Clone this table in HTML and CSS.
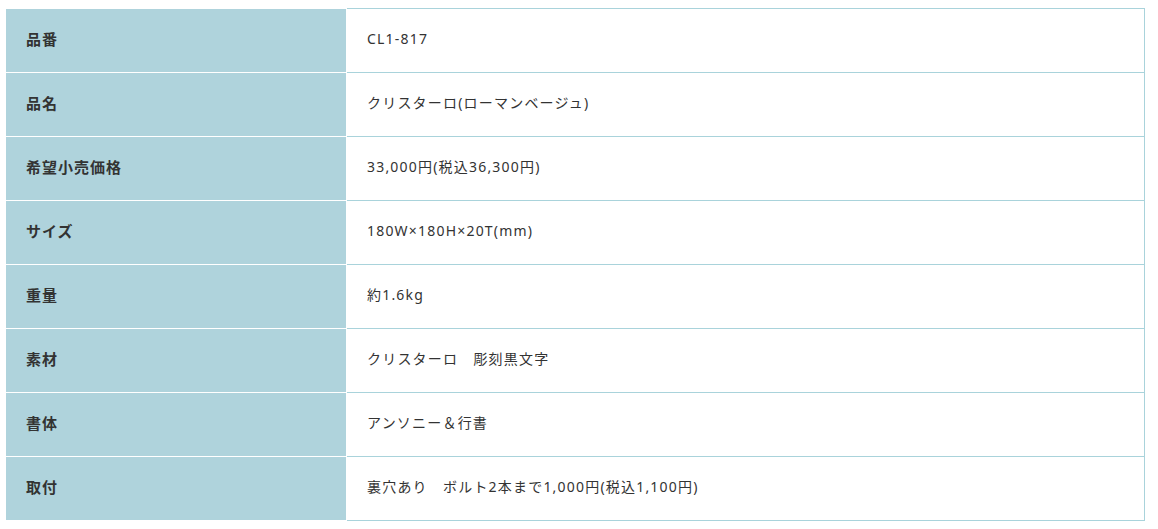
FILE: index.html
```html
<!DOCTYPE html>
<html lang="ja">
<head>
<meta charset="utf-8">
<link rel="stylesheet" href="styles.css">
</head>
<body>
<div class="wrap">
<table class="spec">
<tr><th>品番</th><td>CL1-817</td></tr>
<tr><th>品名</th><td>クリスターロ(ローマンベージュ)</td></tr>
<tr><th>希望小売価格</th><td>33,000円(税込36,300円)</td></tr>
<tr><th>サイズ</th><td>180W×180H×20T(mm)</td></tr>
<tr><th>重量</th><td>約1.6kg</td></tr>
<tr><th>素材</th><td>クリスターロ　彫刻黒文字</td></tr>
<tr><th>書体</th><td>アンソニー＆行書</td></tr>
<tr><th>取付</th><td>裏穴あり　ボルト2本まで1,000円(税込1,100円)</td></tr>
</table>
</div>
</body>
</html>
```
FILE: styles.css
```css
html, body { margin: 0; padding: 0; background: #fff; }
.wrap { padding: 8px 0 0 6px; }
.spec {
  border-collapse: collapse;
  width: 1139px;
  font-family: "Noto Sans", "Noto Sans CJK JP", sans-serif;
  font-size: 14px;
  line-height: 20px;
  color: #333;
}
.spec tr { height: 64px; }
.spec th, .spec td {
  padding: 0 20px 3px;
  text-align: left;
  vertical-align: middle;
}
.spec th {
  width: 300px;
  background: #afd3dc;
  font-weight: bold;
  font-size: 15px;
  letter-spacing: 1px;
  border: 1px solid #fff;
  border-left: none;
  border-top: none;
}
.spec td {
  background: #fff;
  font-weight: normal;
  letter-spacing: 1.2px;
  border: 1px solid #a9d3db;
}
```
